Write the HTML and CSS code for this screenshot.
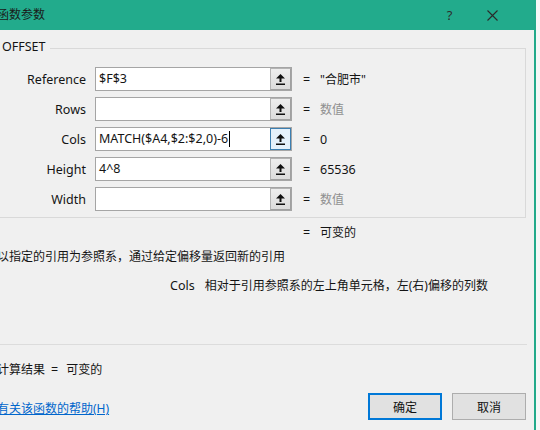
FILE: index.html
```html
<!DOCTYPE html>
<html lang="zh-CN">
<head>
<meta charset="utf-8">
<title>函数参数</title>
<link rel="stylesheet" href="styles.css">
</head>
<body>
<div class="dialog">
  <div class="titlebar">
    <span class="title">函数参数</span>
    <span class="tb-help">?</span>
    <span class="tb-close"><svg width="11" height="11" viewBox="0 0 11 11"><path d="M0.5 0.5 L10.5 10.5 M10.5 0.5 L0.5 10.5" stroke="#2a2a2a" stroke-width="1.1" fill="none"/></svg></span>
  </div>
  <div class="content">
    <div class="group">
      <div class="group-head"><span class="group-name lat">OFFSET</span><span class="group-line"></span></div>
      <div class="group-body">
        <div class="arg-row">
          <span class="arg-label lat">Reference</span>
          <span class="field"><span class="field-text lat">$F$3</span><span class="ref-btn"><svg width="9" height="11" viewBox="0 0 9 11"><path d="M4.5 0 L9 4.5 H5.5 V8 H3.5 V4.5 H0 Z" fill="#111"/><rect x="0" y="9.5" width="9" height="1.5" fill="#111"/></svg></span></span>
          <span class="eq-sign lat">=</span><span class="arg-value">"合肥市"</span>
        </div>
        <div class="arg-row">
          <span class="arg-label lat">Rows</span>
          <span class="field"><span class="field-text lat"></span><span class="ref-btn"><svg width="9" height="11" viewBox="0 0 9 11"><path d="M4.5 0 L9 4.5 H5.5 V8 H3.5 V4.5 H0 Z" fill="#111"/><rect x="0" y="9.5" width="9" height="1.5" fill="#111"/></svg></span></span>
          <span class="eq-sign lat">=</span><span class="arg-value muted">数值</span>
        </div>
        <div class="arg-row">
          <span class="arg-label lat">Cols</span>
          <span class="field"><span class="field-text lat">MATCH($A4,$2:$2,0)-6<span class="caret"></span></span><span class="ref-btn active"><svg width="9" height="11" viewBox="0 0 9 11"><path d="M4.5 0 L9 4.5 H5.5 V8 H3.5 V4.5 H0 Z" fill="#111"/><rect x="0" y="9.5" width="9" height="1.5" fill="#111"/></svg></span></span>
          <span class="eq-sign lat">=</span><span class="arg-value lat">0</span>
        </div>
        <div class="arg-row">
          <span class="arg-label lat">Height</span>
          <span class="field"><span class="field-text lat">4^8</span><span class="ref-btn"><svg width="9" height="11" viewBox="0 0 9 11"><path d="M4.5 0 L9 4.5 H5.5 V8 H3.5 V4.5 H0 Z" fill="#111"/><rect x="0" y="9.5" width="9" height="1.5" fill="#111"/></svg></span></span>
          <span class="eq-sign lat">=</span><span class="arg-value lat">65536</span>
        </div>
        <div class="arg-row">
          <span class="arg-label lat">Width</span>
          <span class="field"><span class="field-text lat"></span><span class="ref-btn"><svg width="9" height="11" viewBox="0 0 9 11"><path d="M4.5 0 L9 4.5 H5.5 V8 H3.5 V4.5 H0 Z" fill="#111"/><rect x="0" y="9.5" width="9" height="1.5" fill="#111"/></svg></span></span>
          <span class="eq-sign lat">=</span><span class="arg-value muted">数值</span>
        </div>
      </div>
    </div>
    <div class="result-row"><span class="eq-sign lat">=</span><span class="arg-value">可变的</span></div>
    <div class="func-desc">以指定的引用为参照系，通过给定偏移量返回新的引用</div>
    <div class="arg-desc"><span class="arg-desc-name lat">Cols</span><span>相对于引用参照系的左上角单元格，左(右)偏移的列数</span></div>
    <div class="separator"></div>
    <div class="calc-row"><span>计算结果</span><span class="calc-eq lat">=</span><span class="calc-value">可变的</span></div>
    <div class="footer">
      <span class="help-link">有关该函数的帮助(H)</span>
      <span class="btn primary">确定</span>
      <span class="btn">取消</span>
    </div>
  </div>
</div>
</body>
</html>
```

FILE: styles.css
```css
html, body {
  margin: 0;
  padding: 0;
}

body {
  width: 540px;
  height: 430px;
  overflow: hidden;
  background: #f6f7f7;
  font-family: "Noto Sans", "Noto Sans CJK SC", sans-serif;
  font-size: 12px;
  color: #141414;
}

.lat {
  font-size: 12.5px;
}

.dialog {
  width: 536px;
  height: 430px;
  box-sizing: border-box;
  border-right: 2px solid #23a98a;
  background: #f0f0f0;
  overflow: hidden;
}

.titlebar {
  height: 30px;
  background: #22ab8c;
  display: flex;
  align-items: center;
}

.title {
  flex: 1;
  margin-left: -3px;
  line-height: 16px;
  color: #1a1a1a;
  white-space: nowrap;
}

.tb-help {
  width: 43px;
  text-align: center;
  font-size: 13px;
  color: #2d2d2d;
}

.tb-close {
  width: 43px;
  margin-right: 20px;
  display: flex;
  justify-content: center;
}

.content {
  padding-top: 9px;
}

.group {
  width: 526px;
}

.group-head {
  display: flex;
  height: 16px;
}

.group-name {
  margin-left: 2px;
  line-height: 16px;
}

.group-line {
  flex: 1;
  margin-left: 4px;
  margin-top: 9px;
  border-top: 1px solid #d9d9d9;
  border-right: 1px solid #d9d9d9;
}

.group-body {
  border-right: 1px solid #d9d9d9;
  border-bottom: 1px solid #d9d9d9;
  padding: 12px 0 6px;
  display: flex;
  flex-direction: column;
  gap: 6px;
}

.arg-row {
  display: flex;
  align-items: center;
  height: 24px;
}

.arg-label {
  width: 86px;
  text-align: right;
  white-space: nowrap;
}

.field {
  margin-left: 9px;
  width: 197px;
  height: 24px;
  box-sizing: border-box;
  border: 1px solid #a5a5a5;
  background: #fff;
  display: flex;
}

.field-text {
  flex: 1;
  padding-left: 3px;
  line-height: 22px;
  white-space: nowrap;
  overflow: hidden;
  display: flex;
  align-items: center;
}

.caret {
  display: inline-block;
  width: 1px;
  height: 16px;
  margin-left: 1px;
  background: #000;
}

.ref-btn {
  width: 21px;
  box-sizing: border-box;
  border: 1px solid #b4b4b4;
  border-right-color: #a0a0a0;
  border-bottom-color: #a0a0a0;
  background: linear-gradient(#eeeeee, #dcdcdc);
  display: flex;
  align-items: center;
  justify-content: center;
}

.ref-btn.active {
  border-color: #3c7fb1;
  background: #e5f1fb;
}

.eq-sign {
  width: 17px;
}

.arg-row .eq-sign {
  margin-left: 11px;
}

.arg-value {
  white-space: nowrap;
}

.arg-value.muted {
  color: #8f8f8f;
}

.result-row {
  margin-top: 7px;
  padding-left: 303px;
  display: flex;
  line-height: 16px;
}

.func-desc {
  margin-top: 8px;
  margin-left: -3px;
  line-height: 16px;
  white-space: nowrap;
}

.arg-desc {
  margin-top: 13px;
  padding-left: 170px;
  display: flex;
  line-height: 16px;
  white-space: nowrap;
}

.arg-desc-name {
  margin-right: 10px;
}

.separator {
  margin-top: 50px;
  width: 527px;
  border-top: 1px solid #dcdcdc;
}

.calc-row {
  margin-top: 17px;
  margin-left: -3px;
  display: flex;
  line-height: 16px;
  white-space: nowrap;
}

.calc-eq {
  margin-left: 6px;
}

.calc-value {
  margin-left: 8px;
}

.footer {
  margin-top: 15px;
  width: 526px;
  display: flex;
  align-items: center;
}

.help-link {
  flex: 1;
  margin-left: -3px;
  margin-top: 3px;
  color: #0066cc;
  text-decoration: underline;
  white-space: nowrap;
}

.btn {
  width: 74px;
  height: 27px;
  box-sizing: border-box;
  border: 1px solid #adadad;
  background: #e1e1e1;
  display: flex;
  align-items: center;
  justify-content: center;
  color: #111;
}

.btn.primary {
  border: 2px solid #0078d7;
}

.btn + .btn {
  margin-left: 10px;
}
```
